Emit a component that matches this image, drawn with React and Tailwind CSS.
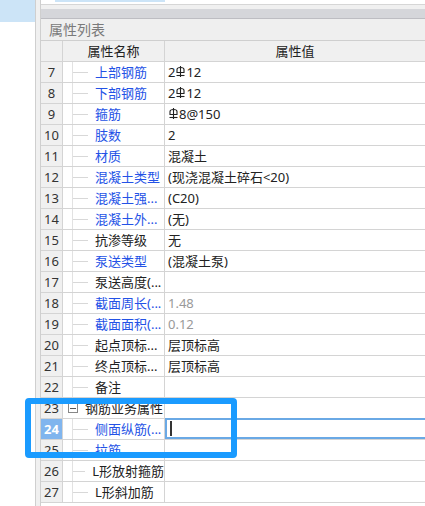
import React from 'react';

const BLUE = 'text-[#2352e6]';
const DARK = 'text-[#222]';

function Steel() {
  return (
    <svg width="9" height="12" viewBox="0 0 9 12" className="inline-block mx-[1px] -mt-[3px]" fill="none" stroke="#222" strokeWidth="1.1">
      <path d="M1 6.5 V3.5 Q1 1.5 4.5 1.5 Q8 1.5 8 3.5 V6.5 Z" />
      <path d="M4.5 0 V11" />
      <path d="M0.5 9.5 H8.5" />
    </svg>
  );
}

const rows = [
  { n: 7, name: '上部钢筋', blue: true, value: <>2<Steel />12</> },
  { n: 8, name: '下部钢筋', blue: true, value: <>2<Steel />12</> },
  { n: 9, name: '箍筋', blue: true, value: <><Steel />8@150</> },
  { n: 10, name: '肢数', blue: true, value: '2' },
  { n: 11, name: '材质', blue: true, value: '混凝土' },
  { n: 12, name: '混凝土类型', blue: true, value: '(现浇混凝土碎石<20)' },
  { n: 13, name: '混凝土强...', blue: true, value: '(C20)' },
  { n: 14, name: '混凝土外...', blue: true, value: '(无)' },
  { n: 15, name: '抗渗等级', blue: false, value: '无' },
  { n: 16, name: '泵送类型', blue: true, value: '(混凝土泵)' },
  { n: 17, name: '泵送高度(...', blue: false, value: '' },
  { n: 18, name: '截面周长(...', blue: true, value: '1.48', gray: true },
  { n: 19, name: '截面面积(...', blue: true, value: '0.12', gray: true },
  { n: 20, name: '起点顶标...', blue: false, value: '层顶标高' },
  { n: 21, name: '终点顶标...', blue: false, value: '层顶标高' },
  { n: 22, name: '备注', blue: false, value: '' },
  { n: 23, name: '钢筋业务属性', group: true },
  { n: 24, name: '侧面纵筋(...', blue: true, selected: true },
  { n: 25, name: '拉筋', blue: true, value: '' },
  { n: 26, name: 'L形放射箍筋', blue: false, value: '' },
  { n: 27, name: 'L形斜加筋', blue: false, value: '' },
];

function Row({ r }) {
  return (
    <div className="flex h-[21px]">
      <div
        className={
          'w-[22px] shrink-0 flex items-center justify-center border-r border-b border-[#d4d4d4] ' +
          (r.selected ? 'bg-[#80b5ee] text-white font-bold' : 'bg-[#f0f0f0] text-[#333]')
        }
      >
        {r.n}
      </div>
      <div className="w-[102px] shrink-0 flex items-center border-r border-b border-[#d4d4d4] bg-white overflow-hidden whitespace-nowrap">
        {r.group ? (
          <>
            <div className="ml-[5px] w-[10px] h-[10px] border border-[#888] flex items-center justify-center">
              <div className="w-[6px] h-px bg-[#555]" />
            </div>
            <span className={'ml-[7px] ' + DARK}>{r.name}</span>
          </>
        ) : (
          <>
            <div className="ml-[9px] w-px h-full bg-[#e2e2e2]" />
            <div className="w-[15px] h-px bg-[#d8d8d8]" />
            <span className={'ml-[7px] ' + (r.blue ? BLUE : DARK)}>{r.name}</span>
          </>
        )}
      </div>
      <div className="flex-1 flex items-center border-b border-[#d4d4d4] bg-white whitespace-nowrap">
        {r.selected ? (
          <div className="w-full h-[21px] -mt-px border-2 border-r-0 border-[#6aa9e5] flex items-center pl-[3px]">
            <div className="w-[2px] h-[15px] bg-[#333]" />
          </div>
        ) : (
          <span className={'pl-[3px] ' + (r.gray ? 'text-[#999]' : DARK)}>{r.value}</span>
        )}
      </div>
    </div>
  );
}

export default function App() {
  return (
    <div
      className="relative w-[425px] h-[506px] overflow-hidden bg-white flex text-[13px] leading-none"
      style={{ fontFamily: '"Noto Sans", "Noto Sans CJK SC", sans-serif' }}
    >
      <div className="w-[36px] shrink-0 border-r border-[#cfcfcf] bg-white">
        <div className="h-[22px] bg-[#cce4f7]" />
      </div>
      <div className="w-[5px] shrink-0 bg-[#f0f0f0] border-r border-[#cfcfcf]" />
      <div className="flex-1 flex flex-col">
        <div className="h-[5px] bg-white border-b border-[#d6d6d6]">
          <div className="ml-[14px] w-[110px] h-[2px] bg-[#cce4f7]" />
        </div>
        <div className="h-[4px] bg-[#f0f0f0]" />
        <div className="h-[10px] bg-[#d5d6da] border-b border-[#bdbdc2]" />
        <div className="h-[22px] bg-[#efefef] border-b border-[#cfcfcf] flex items-center pl-[8px] text-[14px] text-[#7a7a7a]">
          属性列表
        </div>
        <div className="flex h-[21px] bg-[#f0f0f0] text-[#222]">
          <div className="w-[22px] shrink-0 border-r border-b border-[#d4d4d4]" />
          <div className="w-[102px] shrink-0 border-r border-b border-[#d4d4d4] flex items-center justify-center">
            属性名称
          </div>
          <div className="flex-1 border-b border-[#d4d4d4] flex items-center justify-center">属性值</div>
        </div>
        {rows.map((r) => (
          <Row key={r.n} r={r} />
        ))}
      </div>
      <div className="absolute left-[25px] top-[398px] w-[212px] h-[60px] border-[6px] border-[#1a9bff] rounded-[4px]" />
    </div>
  );
}
